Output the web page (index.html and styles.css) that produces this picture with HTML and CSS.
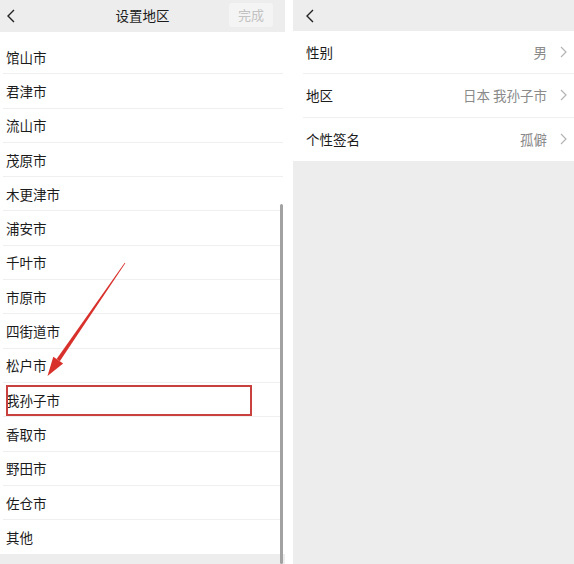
FILE: index.html
```html
<!DOCTYPE html>
<html lang="zh-CN">
<head>
  <meta charset="UTF-8">
  <meta name="viewport" content="width=device-width, initial-scale=1.0">
  <title>设置地区</title>
  <link rel="stylesheet" href="styles.css">
</head>
<body>
  <div class="screen">
    <section class="panel panel-left">
      <header class="bar">
        <svg class="back" width="8" height="14" viewBox="0 0 8 14"><polyline points="7,1 1,7 7,13" /></svg>
        <span class="bar-title">设置地区</span>
        <span class="done">完成</span>
      </header>
      <ul class="city-list">
        <li>馆山市</li>
        <li>君津市</li>
        <li>流山市</li>
        <li>茂原市</li>
        <li>木更津市</li>
        <li>浦安市</li>
        <li>千叶市</li>
        <li>市原市</li>
        <li>四街道市</li>
        <li>松户市</li>
        <li>我孙子市</li>
        <li>香取市</li>
        <li>野田市</li>
        <li>佐仓市</li>
        <li>其他</li>
      </ul>
      <div class="scroll-thumb"></div>
    </section>

    <section class="panel panel-right">
      <header class="bar">
        <svg class="back" width="8" height="14" viewBox="0 0 8 14"><polyline points="7,1 1,7 7,13" /></svg>
      </header>
      <ul class="info-list">
        <li><span class="label">性别</span><span class="value">男</span><svg class="more" width="7" height="12" viewBox="0 0 7 12"><polyline points="1,1 6,6 1,11" /></svg></li>
        <li><span class="label">地区</span><span class="value">日本 我孙子市</span><svg class="more" width="7" height="12" viewBox="0 0 7 12"><polyline points="1,1 6,6 1,11" /></svg></li>
        <li><span class="label">个性签名</span><span class="value">孤僻</span><svg class="more" width="7" height="12" viewBox="0 0 7 12"><polyline points="1,1 6,6 1,11" /></svg></li>
      </ul>
    </section>

    <!-- annotation drawn over the screenshot -->
    <div class="mark-box"></div>
    <svg class="mark-arrow" width="574" height="564" viewBox="0 0 574 564">
      <polygon points="125.3,263.2 124.7,262.8 56.6,359.1 59.8,361.3" />
      <polygon points="47.5,376 53.3,356.8 63.1,363.6" />
    </svg>
  </div>
</body>
</html>
```

FILE: styles.css
```css
body {
  margin: 0;
  background: #fff;
  font-family: "Noto Sans CJK SC", "Noto Sans", sans-serif;
  color: #1b1b1b;
  overflow: hidden;
}
ul {
  list-style: none;
  margin: 0;
  padding: 0;
}
.screen {
  position: relative;
  width: 574px;
  height: 564px;
  display: flex;
  gap: 8px;
}
.panel {
  position: relative;
  height: 564px;
  background: #ededed;
  display: flex;
  flex-direction: column;
}
.panel-left {
  width: 285px;
}
.panel-right {
  flex: 1;
}
.bar {
  position: relative;
  height: 32px;
  flex-shrink: 0;
  display: flex;
  align-items: center;
  padding: 0 12px 0 7px;
}
.panel-right .bar {
  height: 31px;
  padding-left: 13px;
}
.back polyline {
  fill: none;
  stroke: #222;
  stroke-width: 1.4;
}
.bar-title {
  position: absolute;
  left: 0;
  right: 0;
  text-align: center;
  font-size: 13.5px;
  line-height: 32px;
  margin-top: -2px;
  pointer-events: none;
}
.done {
  margin-left: auto;
  width: 44px;
  height: 24px;
  line-height: 24px;
  text-align: center;
  border-radius: 3px;
  background: #f4f4f4;
  color: #c2c2c2;
  font-size: 13px;
  margin-top: -2px;
}
.city-list {
  background: #fff;
  padding-top: 8px;
}
.city-list li {
  box-sizing: border-box;
  height: 34.3px;
  display: flex;
  align-items: center;
  margin: 0 2px 0 3px;
  padding-left: 3px;
  font-size: 13.5px;
  border-bottom: 1px solid #efefef;
}
.city-list li:last-child {
  border-bottom: none;
}
.scroll-thumb {
  position: absolute;
  left: 280px;
  top: 204px;
  width: 2.5px;
  height: 360px;
  border-radius: 2px;
  background: #a2a2a2;
}
.info-list {
  background: #fff;
}
.info-list li {
  box-sizing: border-box;
  height: 43.3px;
  display: flex;
  align-items: center;
  margin-left: 10px;
  padding: 0 7px 0 3px;
  font-size: 13.5px;
  border-bottom: 1px solid #efefef;
}
.info-list li:last-child {
  border-bottom: none;
}
.info-list .value {
  margin-left: auto;
  color: #8a8a8a;
}
.more {
  margin-left: 13px;
}
.more polyline {
  fill: none;
  stroke: #b4b4b4;
  stroke-width: 1.2;
}
.mark-box {
  position: absolute;
  left: 6px;
  top: 385px;
  width: 242px;
  height: 27px;
  border: 2px solid #c9403e;
}
.mark-arrow {
  position: absolute;
  left: 0;
  top: 0;
  pointer-events: none;
}
.mark-arrow polygon {
  fill: #d8312c;
}
```
